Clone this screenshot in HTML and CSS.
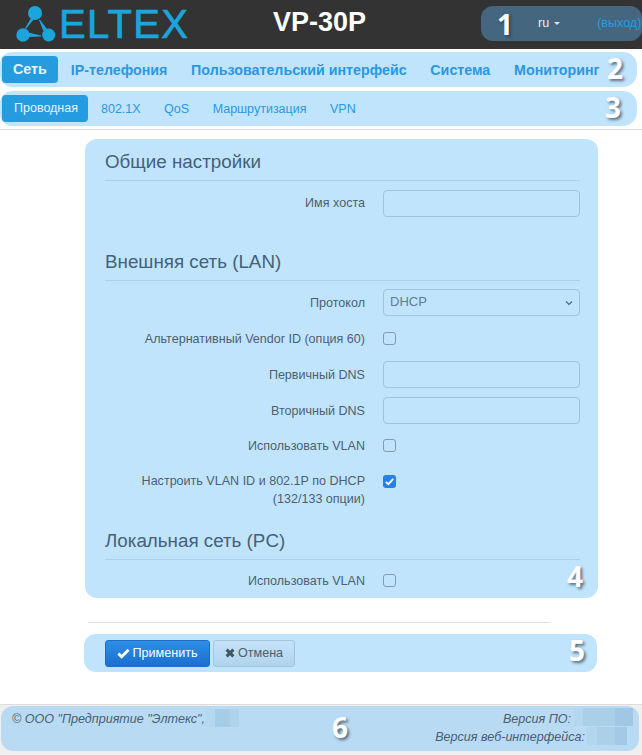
FILE: index.html
```html
<!DOCTYPE html>
<html lang="ru">
<head>
<meta charset="utf-8">
<title>VP-30P</title>
<link rel="stylesheet" href="styles.css">
</head>
<body>
<header class="topbar">
  <div class="brand">
    <svg class="logo-mark" width="50" height="48" viewBox="0 0 50 48">
      <g fill="#1ba5dc">
        <circle cx="25" cy="12" r="7"/>
        <circle cx="13" cy="34" r="6.7"/>
        <circle cx="38.7" cy="34" r="6.5"/>
        <path d="M21 17 L24 18 L16 28 L15 27.5 Z"/>
        <path d="M18 31.5 L18 36 L31 35.4 L31 34.4 Z"/>
        <path d="M37 28 L33.4 30 L29 19 L29.8 18.6 Z"/>
      </g>
    </svg>
    <span class="logo-text">ELTEX</span>
  </div>
  <h1 class="model">VP-30P</h1>
  <div class="session">
    <span class="lang">ru<i class="caret"></i></span>
    <a class="logout">(выход)</a>
    <span class="mark mark-1">1</span>
  </div>
</header>

<nav class="tabs tabs-main">
  <a class="tab active">Сеть</a>
  <a class="tab">IP-телефония</a>
  <a class="tab">Пользовательский интерфейс</a>
  <a class="tab">Система</a>
  <a class="tab">Мониторинг</a>
  <span class="mark mark-2">2</span>
</nav>
<nav class="tabs tabs-sub">
  <a class="tab active">Проводная</a>
  <a class="tab">802.1X</a>
  <a class="tab">QoS</a>
  <a class="tab">Маршрутизация</a>
  <a class="tab">VPN</a>
  <span class="mark mark-3">3</span>
</nav>
<div class="rule-top"></div>

<main class="panel">
  <h2 class="legend">Общие настройки</h2>
  <div class="row row-first"><label>Имя хоста</label><input class="field" type="text"></div>

  <h2 class="legend legend-next">Внешняя сеть (LAN)</h2>
  <div class="row row-select"><label>Протокол</label>
    <div class="select">DHCP
      <svg class="chev" width="8" height="6" viewBox="0 0 8 6"><path d="M1 1.5 L4 4.5 L7 1.5" fill="none" stroke="#4a6a85" stroke-width="1.2"/></svg>
    </div>
  </div>
  <div class="row"><label>Альтернативный Vendor ID (опция 60)</label><span class="check"></span></div>
  <div class="row"><label>Первичный DNS</label><input class="field" type="text"></div>
  <div class="row"><label>Вторичный DNS</label><input class="field" type="text"></div>
  <div class="row row-vlan"><label>Использовать VLAN</label><span class="check"></span></div>
  <div class="row row-multi"><label>Настроить VLAN ID и 802.1P по DHCP<br>(132/133 опции)</label>
    <span class="check checked"><svg width="13" height="13" viewBox="0 0 13 13"><path d="M2.8 6.8 L5.4 9.2 L10.2 3.8" fill="none" stroke="#fff" stroke-width="1.8"/></svg></span>
  </div>
  <h2 class="legend legend-last">Локальная сеть (PC)</h2>
  <div class="row row-tight"><label>Использовать VLAN</label><span class="check"></span></div>
  <span class="mark mark-4">4</span>
</main>

<div class="rule-mid"></div>

<div class="actions">
  <button class="btn btn-primary" type="button">
    <svg width="13" height="11" viewBox="0 0 13 11"><path d="M1.3 5.6 L4.6 8.8 L11.6 1.8" fill="none" stroke="#fff" stroke-width="2.8"/></svg>Применить
  </button>
  <button class="btn btn-default" type="button">
    <svg width="10" height="10" viewBox="0 0 10 10"><path d="M1.6 1.6 L8.4 8.4 M8.4 1.6 L1.6 8.4" fill="none" stroke="#3f5566" stroke-width="3"/></svg>Отмена
  </button>
  <span class="mark mark-5">5</span>
</div>

<footer class="footer">
  <div class="footer-bar">
    <div class="copy">© ООО "Предприятие "Элтекс",</div>
    <span class="blur blur-a"></span>
    <div class="versions">
      <div class="ver ver-fw">Версия ПО:<span class="blur blur-b"></span></div>
      <div class="ver ver-web">Версия веб-интерфейса:<span class="blur blur-c"></span></div>
    </div>
    <span class="mark mark-6">6</span>
  </div>
</footer>
</body>
</html>
```
FILE: styles.css
```css
* { box-sizing: border-box; }
html, body { margin: 0; padding: 0; }
body {
  width: 642px;
  height: 755px;
  overflow: hidden;
  background: #fff;
  font-family: "Liberation Sans", Arial, sans-serif;
  font-size: 12.55px;
  color: #4a5f70;
}

.topbar {
  height: 49px;
  background: #333;
  position: relative;
  display: flex;
  align-items: center;
}
.brand { display: flex; align-items: center; margin-left: 10px; width: 248px; }
.logo-mark { flex: none; }
.logo-text {
  font-size: 40px;
  line-height: 36px;
  letter-spacing: 1.3px;
  color: #1ba5dc;
  -webkit-text-stroke: 0.7px #1ba5dc;
  margin-left: -1px;
  margin-top: -2px;
}
.model {
  margin: 0 0 0 15px;
  font-size: 27px;
  font-weight: bold;
  color: #fff;
  line-height: 49px;
  position: relative;
  top: -2px;
}
.session {
  position: absolute;
  left: 481px;
  top: 6px;
  width: 161px;
  height: 35px;
  background: #44667f;
  border-radius: 12px;
  display: flex;
  align-items: center;
}
.lang { color: #e8eef2; margin-left: 57px; position: relative; top: -1px; }
.caret {
  display: inline-block;
  margin-left: 5px;
  vertical-align: 2px;
  border-top: 3px solid #dfe6ea;
  border-left: 3px solid transparent;
  border-right: 3px solid transparent;
}
.logout { color: #1f9fe0; margin-left: 37px; position: relative; top: -1px; white-space: nowrap; }

.mark {
  position: absolute;
  font-family: "Open Sans", sans-serif;
  font-weight: 700;
  font-style: normal;
  font-size: 28px;
  line-height: 30px;
  color: #fff;
  text-shadow: 2px 2px 3px rgba(40, 50, 60, .65);
}
.mark-1 { left: 16px; top: 3px; }
.mark-2 { left: 607px; top: 1px; }
.mark-3 { left: 605px; top: 1px; }
.mark-4 { left: 482px; bottom: 7px; }
.mark-5 { left: 485px; top: 1px; }
.mark-6 { left: 331px; top: 6px; }

.tabs {
  position: relative;
  display: flex;
  align-items: center;
  width: 637px;
  height: 35px;
  padding-left: 2px;
  background: #c1e4fd;
  border-radius: 12px 14px 14px 12px;
}
.tabs-main { margin-top: 3px; }
.tabs-sub { margin-top: 4px; }
.tab { color: #2a97e0; border-radius: 4px; white-space: nowrap; }
.tabs-main .tab { font-size: 14.25px; font-weight: bold; margin-right: 23.75px; }
.tabs-main .tab.active { margin-right: 13px; padding: 6px 11px; height: 27px; line-height: 15px; }
.tabs-sub .tab { font-size: 12.5px; margin-right: 23.5px; }
.tabs-sub .tab.active { margin-right: 13px; padding: 5px 10px 5px 12px; height: 27px; line-height: 17px; }
.tab.active { background: #259be0; color: #e6f4fd; }

.rule-top { height: 1px; margin-top: 3px; background: #ddd; }

.panel {
  position: relative;
  width: 513px;
  height: 459px;
  margin: 9px 0 0 85px;
  padding: 12px 18px 0 20px;
  background: #c1e4fd;
  border-radius: 12px;
}
.legend {
  margin: 0;
  height: 30px;
  font-size: 18.8px;
  font-weight: normal;
  line-height: 22px;
  color: #44617a;
  border-bottom: 1px solid #a9d0ec;
}
.legend-next { margin-top: 34px; }
.legend-last { margin-top: 22px; }

.row {
  display: grid;
  grid-template-columns: 260px 197px;
  column-gap: 18px;
  align-items: center;
  height: 27px;
  margin-top: 9px;
}
.row label { text-align: right; color: #4d5f6d; line-height: 18px; }
.row-first label { margin-bottom: 2px; }
.row-select { margin-top: 8px; }
.row-vlan { margin-top: 8px; }
.row-tight { margin-top: 7px; }
.row-multi { height: 36px; margin-top: 13px; align-items: start; }
.row-multi .check { margin-top: 3px; }

.field, .select {
  display: block;
  width: 197px;
  height: 27px;
  margin: 0;
  padding: 0 6px;
  background: #c1e4fd;
  border: 1px solid #9fc3dc;
  border-radius: 4px;
  outline: none;
}
.select {
  position: relative;
  color: #5f7c93;
  font-size: 13px;
  line-height: 23px;
}
.chev { position: absolute; right: 6px; top: 10px; }
.check {
  display: block;
  width: 13px;
  height: 13px;
  background: #c1e4fd;
  border: 1px solid #7f9cb4;
  border-radius: 3px;
}
.check.checked { background: #2680e6; border: 0; }
.check.checked svg { display: block; }

.rule-mid { width: 463px; height: 1px; margin: 24px 0 0 88px; background: #e2e2e2; }

.actions {
  position: relative;
  display: flex;
  align-items: center;
  gap: 3px;
  width: 513px;
  height: 38px;
  margin: 11px 0 0 84px;
  padding-left: 21px;
  background: #c1e4fd;
  border-radius: 12px;
}
.btn {
  display: flex;
  align-items: center;
  justify-content: center;
  gap: 2px;
  height: 27px;
  margin: 0;
  padding: 0;
  font-family: "Liberation Sans", sans-serif;
  font-size: 12.6px;
  border-radius: 3px;
}
.btn-primary {
  width: 105px;
  color: #fff;
  background: linear-gradient(#2d8fe6, #1a6fd0);
  border: 1px solid #1a6fc4;
}
.btn-default {
  width: 82px;
  gap: 3px;
  color: #4a5f70;
  background: linear-gradient(#c4e3f9, #b0d3ec);
  border: 1px solid #a3c5dd;
}

.footer {
  position: absolute;
  left: 0;
  top: 704px;
  width: 642px;
  height: 51px;
  padding: 1px 3px 0 1px;
  background: #efefef;
  border-top: 1px solid #ddd;
}
.footer-bar {
  position: relative;
  display: flex;
  justify-content: space-between;
  height: 45px;
  background: #b8dbf3;
  border-radius: 12px;
  color: #4a6073;
  font-style: italic;
  font-size: 12.55px;
  line-height: 18px;
}
.copy { margin: 4px 0 0 11px; }
.versions { margin-top: 4px; text-align: right; }
.ver { position: relative; }
.ver-fw { padding-right: 68px; }
.ver-web { padding-right: 54px; }
.blur { position: absolute; display: block; }
.blur-a {
  left: 204px; top: 3px; width: 34px; height: 18px;
  background: linear-gradient(90deg, #b4d8f0 0 30%, #a6cde7 30% 75%, #aed3ec 75%);
}
.blur-b {
  right: 6px; top: -2px; width: 59px; height: 18px;
  background: linear-gradient(90deg, #b3d7ef 0 15%, #a9cfe9 15% 70%, #a0c8e4 70%);
}
.blur-c {
  right: 12px; top: -1px; width: 40px; height: 18px;
  background: linear-gradient(90deg, #b2d6ee 0 25%, #abd1ea 25% 70%, #a2c9e5 70%);
}
```
